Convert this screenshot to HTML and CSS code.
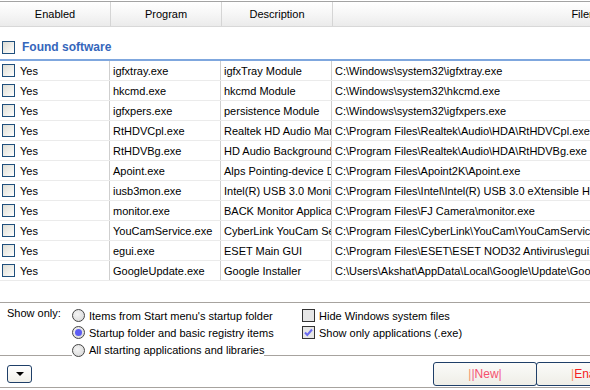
FILE: index.html
```html
<!DOCTYPE html>
<html lang="en">
<head>
    <meta charset="UTF-8">
    <title>Startup programs</title>
    <link rel="stylesheet" href="styles.css">
</head>
<body>
    <div class="list">
        <div class="head">
            <div class="hcell">Enabled</div>
            <div class="hcell">Program</div>
            <div class="hcell">Description</div>
            <div class="hcell hfile">Filename</div>
        </div>

        <div class="group">
            <span class="box"></span>
            <span class="group-title">Found software</span>
        </div>

        <div class="rows">
            <div class="row"><div class="cell c-en"><span class="box"></span>Yes</div><div class="cell">igfxtray.exe</div><div class="cell">igfxTray Module</div><div class="cell">C:\Windows\system32\igfxtray.exe</div></div>
            <div class="row"><div class="cell c-en"><span class="box"></span>Yes</div><div class="cell">hkcmd.exe</div><div class="cell">hkcmd Module</div><div class="cell">C:\Windows\system32\hkcmd.exe</div></div>
            <div class="row"><div class="cell c-en"><span class="box"></span>Yes</div><div class="cell">igfxpers.exe</div><div class="cell">persistence Module</div><div class="cell">C:\Windows\system32\igfxpers.exe</div></div>
            <div class="row"><div class="cell c-en"><span class="box"></span>Yes</div><div class="cell">RtHDVCpl.exe</div><div class="cell">Realtek HD Audio Manager</div><div class="cell">C:\Program Files\Realtek\Audio\HDA\RtHDVCpl.exe</div></div>
            <div class="row"><div class="cell c-en"><span class="box"></span>Yes</div><div class="cell">RtHDVBg.exe</div><div class="cell">HD Audio Background Process</div><div class="cell">C:\Program Files\Realtek\Audio\HDA\RtHDVBg.exe</div></div>
            <div class="row"><div class="cell c-en"><span class="box"></span>Yes</div><div class="cell">Apoint.exe</div><div class="cell">Alps Pointing-device Driver</div><div class="cell">C:\Program Files\Apoint2K\Apoint.exe</div></div>
            <div class="row"><div class="cell c-en"><span class="box"></span>Yes</div><div class="cell">iusb3mon.exe</div><div class="cell">Intel(R) USB 3.0 Monitor</div><div class="cell">C:\Program Files\Intel\Intel(R) USB 3.0 eXtensible Host Controller Driver\Application\iusb3mon.exe</div></div>
            <div class="row"><div class="cell c-en"><span class="box"></span>Yes</div><div class="cell">monitor.exe</div><div class="cell">BACK Monitor Application</div><div class="cell">C:\Program Files\FJ Camera\monitor.exe</div></div>
            <div class="row"><div class="cell c-en"><span class="box"></span>Yes</div><div class="cell">YouCamService.exe</div><div class="cell">CyberLink YouCam Service</div><div class="cell">C:\Program Files\CyberLink\YouCam\YouCamService.exe</div></div>
            <div class="row"><div class="cell c-en"><span class="box"></span>Yes</div><div class="cell">egui.exe</div><div class="cell">ESET Main GUI</div><div class="cell">C:\Program Files\ESET\ESET NOD32 Antivirus\egui.exe</div></div>
            <div class="row"><div class="cell c-en"><span class="box"></span>Yes</div><div class="cell">GoogleUpdate.exe</div><div class="cell">Google Installer</div><div class="cell">C:\Users\Akshat\AppData\Local\Google\Update\GoogleUpdate.exe</div></div>
        </div>
    </div>

    <div class="filters">
        <div class="show-label">Show only:</div>
        <div class="radios">
            <label class="opt"><span class="radio"></span>Items from Start menu's startup folder</label>
            <label class="opt"><span class="radio on"></span>Startup folder and basic registry items</label>
            <label class="opt opt-last"><span class="radio"></span>All starting applications and libraries</label>
        </div>
        <div class="checks">
            <label class="opt"><span class="check"></span>Hide Windows system files</label>
            <label class="opt"><span class="check on">
                <svg width="11" height="11" viewBox="0 0 11 11"><path d="M2 5.5 L4.3 8 L9 2.5" fill="none" stroke="#6a6af0" stroke-width="2"/></svg>
            </span>Show only applications (.exe)</label>
        </div>
    </div>

    <div class="actions">
        <button class="drop"><span class="tri"></span></button>
        <div class="btns">
            <button class="btn"><span class="bar">|</span><span class="bar2">|</span><span class="red">New</span><span class="bar2">|</span></button>
            <button class="btn btn-cut"><span class="bar">|</span><span class="red2">Enable</span></button>
        </div>
    </div>
</body>
</html>
```

FILE: styles.css
```css
body {
    margin: 0;
    width: 590px;
    height: 390px;
    overflow: hidden;
    background: #fff;
    font-family: 'Liberation Sans', Arial, sans-serif;
    font-size: 11px;
    color: #000;
}

.list {
    padding-top: 1px;
}

.head {
    display: grid;
    grid-template-columns: 111px 111px 111px 523px;
    height: 24px;
    border-top: 1px solid #a3a3a3;
    border-bottom: 1px solid #d8d8d8;
    background: linear-gradient(#ffffff, #f6f6f6 50%, #ebebeb);
}

.hcell {
    display: flex;
    align-items: center;
    justify-content: center;
    border-right: 1px solid #d5d5d5;
}

.group {
    display: flex;
    align-items: center;
    height: 24px;
    padding: 8px 0 0 2px;
    border-bottom: 2px solid #7fa7de;
}

.group-title {
    margin-left: 7px;
    font-size: 12px;
    font-weight: bold;
    color: #3566bb;
}

.box {
    width: 11px;
    height: 11px;
    border: 1px solid #1f4f7c;
    background: linear-gradient(135deg, #dcdcd5, #f4f4f0 70%, #fff);
    flex: none;
}

.row {
    display: grid;
    grid-template-columns: 110px 111px 111px 1fr;
    height: 19px;
    border-bottom: 1px solid #ebebeb;
}

.cell {
    display: flex;
    align-items: center;
    padding-left: 3px;
    white-space: nowrap;
    overflow: hidden;
    border-right: 1px solid #cfcfcf;
}

.cell:last-child {
    border-right: none;
}

.c-en {
    padding-left: 2px;
}

.c-en .box {
    margin-right: 5px;
}

.filters {
    display: flex;
    margin-top: 21px;
    height: 52px;
    border-top: 1px solid #a7a39f;
    border-bottom: 1px solid #a7a39f;
}

.show-label {
    padding: 4px 0 0 7px;
    width: 65px;
}

.radios {
    width: 223px;
    padding-top: 4px;
}

.opt {
    display: flex;
    align-items: center;
    height: 17px;
    white-space: nowrap;
}

.opt-last {
    position: relative;
    width: 192px;
    background: #fff;
    margin-bottom: -1px;
    height: 18px;
}

.radio {
    width: 11px;
    height: 11px;
    border: 1px solid #444;
    border-radius: 50%;
    background: radial-gradient(circle at 40% 40%, #f4f4f4, #d4d4d4);
    margin-right: 4px;
    position: relative;
    flex: none;
}

.radio.on::after {
    content: "";
    position: absolute;
    left: 2px;
    top: 2px;
    width: 7px;
    height: 7px;
    border-radius: 50%;
    background: #5c5cf4;
}

.checks {
    padding: 4px 0 0 7px;
}

.check {
    width: 11px;
    height: 11px;
    border: 1px solid #333;
    background: #e6e6e6;
    margin-right: 4px;
    display: flex;
    align-items: center;
    justify-content: center;
    flex: none;
}

.actions {
    display: flex;
    justify-content: space-between;
    align-items: center;
    height: 31px;
    border-bottom: 1px solid #a7a39f;
}

.drop {
    margin-left: 7px;
    margin-top: 4px;
    width: 25px;
    height: 18px;
    padding: 0;
    border: 1px solid #1f3f68;
    border-radius: 3px;
    background: linear-gradient(#ffffff, #f0efe9);
    display: flex;
    align-items: center;
    justify-content: center;
}

.tri {
    width: 0;
    height: 0;
    border-left: 4px solid transparent;
    border-right: 4px solid transparent;
    border-top: 4px solid #000;
}

.btns {
    display: flex;
    margin-top: 4px;
}

.btn {
    width: 104px;
    height: 24px;
    padding: 0;
    border: 1px solid #1f3f68;
    border-radius: 3px;
    background: linear-gradient(#fbfbf9, #efeee7);
    font-family: 'Liberation Sans', Arial, sans-serif;
    font-size: 12px;
}

.btn-cut {
    width: 100px;
    margin-left: -1px;
    text-align: left;
    padding-left: 34px;
    margin-right: -46px;
}

.bar {
    color: #f8906a;
}

.bar2 {
    color: #f05a8a;
}

.red {
    color: #f5506e;
}

.red2 {
    color: #f52020;
}
```
